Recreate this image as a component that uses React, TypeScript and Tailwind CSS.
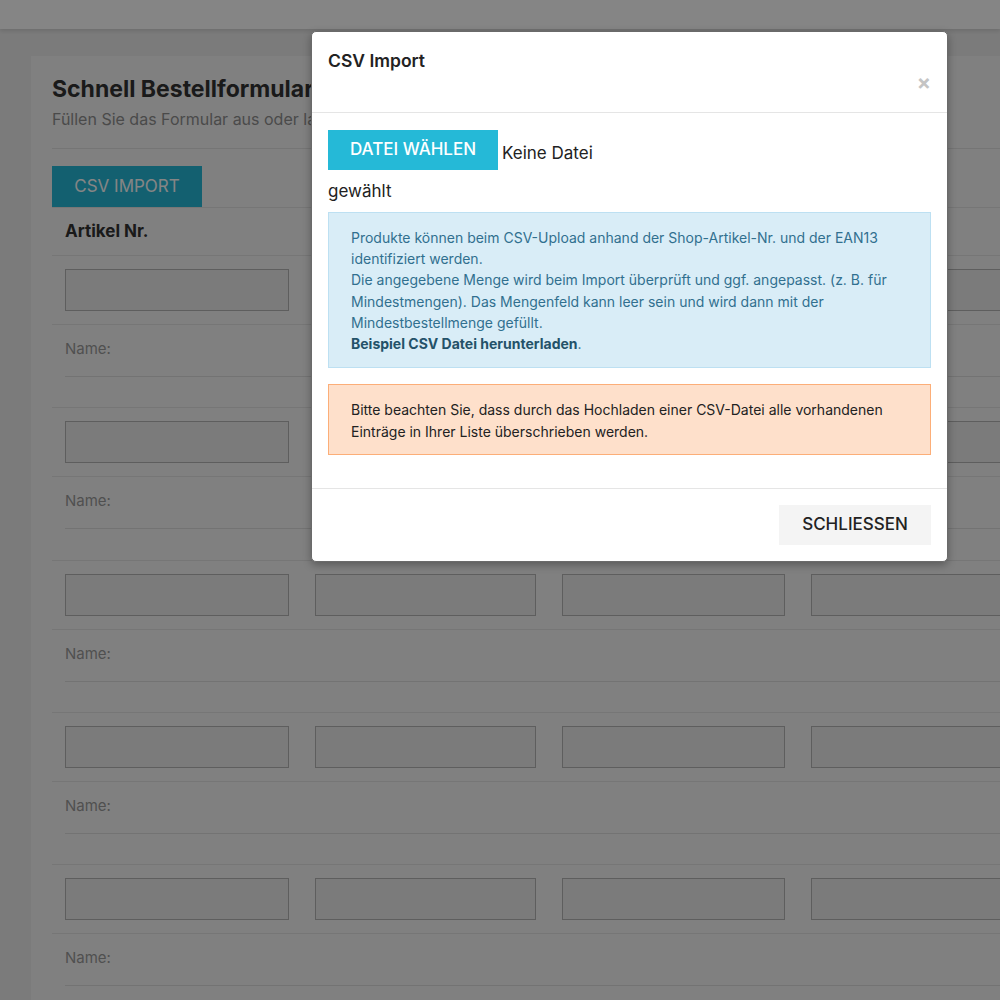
import React from "react";

const rows = [0, 1, 2, 3, 4];

function Row() {
  return (
    <div>
      <div className="grid grid-cols-[250px_247px_249px_250px_250px] border-t border-[#e2e2e2]">
        {[0, 1, 2, 3, 4].map((i) => (
          <div key={i} className="px-[13px] pt-[13px] pb-[13px]">
            <div className="h-[42px] w-full border border-[#b5b5b5] bg-[#ebebeb]" />
          </div>
        ))}
      </div>
      <div className="border-t border-[#e2e2e2] px-[13px] pt-[12px] mb-[30.25px]">
        <div className="border-b border-[#dcdcdc] pb-[15px] text-[15px] leading-[24px] text-[#9a9a9a]">
          Name:
        </div>
      </div>
    </div>
  );
}

export default function App() {
  return (
    <div
      className="relative h-[1000px] w-[1000px] overflow-hidden bg-[#ececec]"
      style={{ fontFamily: "Inter, 'Noto Sans', sans-serif" }}
    >
      <div className="h-[29px] bg-white shadow-[0_2px_4px_rgba(0,0,0,0.12)]" />
      <div className="ml-[31px] mt-[27px] w-[1200px] bg-[#f6f6f6] pb-[40px] pl-[21px] pt-[18px]">
        <h1 className="text-[23px] font-bold leading-[30px] text-[#333]">Schnell Bestellformular</h1>
        <p className="mt-[3px] text-[16px] leading-[24px] text-[#8f8f8f]">
          Füllen Sie das Formular aus oder laden Sie eine CSV-Datei hoch.
        </p>
        <div className="mt-[17px] border-t border-[#e0e0e0]" />
        <div className="mt-[17px] flex">
          <div className="flex h-[41px] w-[150px] items-center justify-center bg-[#25b9d7] text-[17px] uppercase text-white">
            CSV Import
          </div>
        </div>
        <div className="border-t border-[#e2e2e2]">
          <div className="grid h-[47px] grid-cols-[250px_247px_249px_250px_250px] items-center">
            <div className="px-[13px] text-[17px] font-bold text-[#333]">Artikel Nr.</div>
          </div>
          {rows.map((r) => (
            <Row key={r} />
          ))}
        </div>
      </div>

      <div className="absolute inset-0 bg-black/[0.48]" />

      <div className="absolute left-[311px] top-[31px] w-[637px] overflow-hidden rounded-[5px] border border-[#6a6a6a] bg-white shadow-[0_3px_9px_rgba(0,0,0,0.3)]">
        <div className="flex h-[81px] items-start justify-between border-b border-[#e5e5e5] px-[16px] pt-[15px]">
          <h2 className="text-[17.5px] font-semibold leading-[27px] text-[#222]">CSV Import</h2>
          <span className="mt-[26px] text-[21px] font-bold leading-[20px] text-[#c4c4c4]">×</span>
        </div>
        <div className="px-[16px] pb-[33px] pt-[17px]">
          <div className="flex items-start">
            <div className="flex h-[40px] w-[170px] items-center justify-center bg-[#25b9d7] text-[17px] font-medium uppercase text-white">
              Datei wählen
            </div>
            <span className="ml-[4px] mt-[11px] text-[17px] leading-[24px] text-[#222]">Keine Datei</span>
          </div>
          <div className="mt-[9px] text-[17px] leading-[24px] text-[#222]">gewählt</div>
          <div className="mt-[9px] border border-[#bde0f2] bg-[#d9edf7] px-[22px] pb-[13px] pt-[14px] text-[14px] leading-[21.2px] text-[#31708f]">
            Produkte können beim CSV-Upload anhand der Shop-Artikel-Nr. und der EAN13 identifiziert werden.
            <br />
            Die angegebene Menge wird beim Import überprüft und ggf. angepasst. (z. B. für Mindestmengen). Das Mengenfeld kann leer sein und wird dann mit der Mindestbestellmenge gefüllt.
            <br />
            <span className="font-bold text-[#245269]">Beispiel CSV Datei herunterladen</span>.
          </div>
          <div className="mt-[16px] border border-[#fcae78] bg-[#fee0cb] px-[22px] pb-[12px] pt-[14px] text-[14px] leading-[21.5px] text-[#222]">
            Bitte beachten Sie, dass durch das Hochladen einer CSV-Datei alle vorhandenen Einträge in Ihrer Liste überschrieben werden.
          </div>
        </div>
        <div className="flex justify-end border-t border-[#e5e5e5] px-[16px] py-[16px]">
          <div className="flex h-[40px] w-[152px] items-center justify-center bg-[#f4f4f4] text-[17px] font-medium uppercase text-[#222]">
            Schliessen
          </div>
        </div>
      </div>
    </div>
  );
}
